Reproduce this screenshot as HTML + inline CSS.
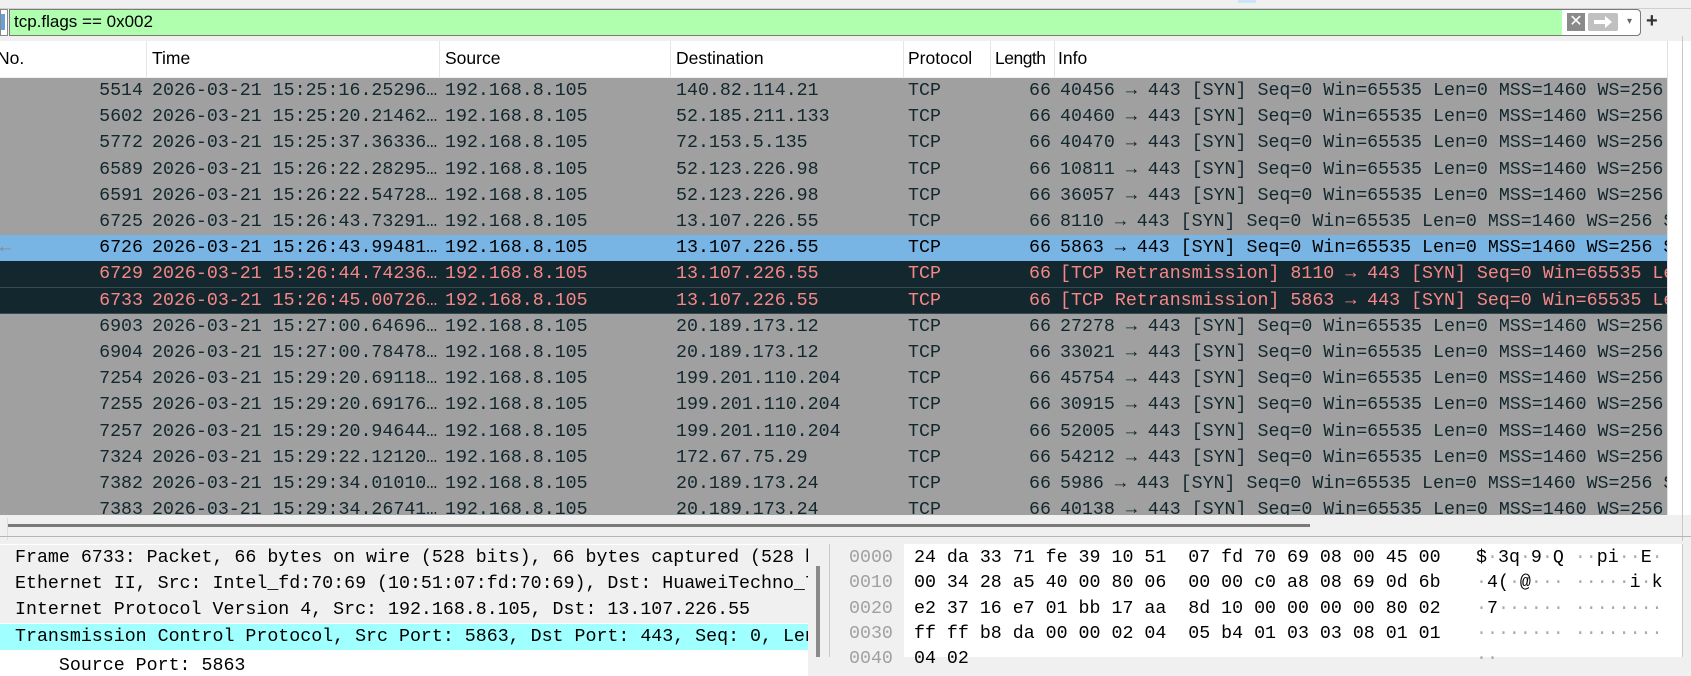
<!DOCTYPE html>
<html><head><meta charset="utf-8"><style>
*{margin:0;padding:0;box-sizing:border-box}
body{width:1691px;height:657px;overflow:hidden;background:#f0f0f0;position:relative;font-family:"Liberation Mono",monospace;}
.abs{position:absolute}
.mono{font-family:"Liberation Mono",monospace;font-size:18.3px;white-space:pre}
.sans{font-family:"Liberation Sans",sans-serif;font-size:17.5px;white-space:pre}
.row{position:absolute;left:0;width:1667px;height:26.2px;background:#a0a0a0;color:#12272e;overflow:hidden}
.row span{position:absolute;top:3px}
.sel{background:#78b4e4;color:#000}
.bad{background:#12272e;color:#f78787;border-bottom:1px solid #3a4a50}
.hdr{position:absolute;top:41px;height:36px;left:0;width:1667px;background:#fff}
.hdr span{position:absolute;top:7px;color:#000}
.sep{position:absolute;top:0;width:1px;height:36px;background:#e5e5e5}
.det{position:absolute;left:0;width:808px;height:26px;background:#f0f0f0;overflow:hidden}
.det span{position:absolute;left:15px;top:3px}
</style></head><body>
<div class="abs" style="left:0;top:0;width:1691px;height:9px;background:#f0f0f0;border-bottom:1px solid #d0d0d0"></div>
<div class="abs" style="left:1238px;top:0;width:18px;height:3px;background:#cce4f7"></div>
<div class="abs" style="left:0;top:9px;width:8px;height:27px;background:#fff;border:1px solid #888"></div>
<div class="abs" style="left:1px;top:14px;width:4px;height:16px;background:#6a9fd8"></div>
<div class="abs" style="left:9px;top:9px;width:1632px;height:27px;background:#afffaf;border:1px solid #7a7a7a;border-radius:0 4px 4px 0"></div>
<div class="abs sans" style="left:14px;top:12px;font-size:17px;color:#000">tcp.flags == 0x002</div>
<div class="abs" style="left:1562px;top:10px;width:78px;height:25px;background:#fff;border-radius:0 4px 4px 0"></div>
<div class="abs" style="left:1567px;top:13px;width:18px;height:18px;background:#8a8a8a;color:#fff;font:16px 'Liberation Sans';text-align:center;line-height:18px">✕</div>
<div class="abs" style="left:1588px;top:13px;width:30px;height:18px;background:#c0c0c0;border-radius:2px"></div>
<svg class="abs" style="left:1591px;top:14px" width="24" height="16"><path d="M3 6h11V2l7 6-7 6v-4H3z" fill="#fff"/></svg>
<div class="abs" style="left:1627px;top:16px;font:10px 'Liberation Sans';color:#666">▾</div>
<div class="abs" style="left:1646px;top:10px;font:bold 20px 'Liberation Sans';color:#333">+</div>
<div class="hdr sans">
<span style="left:-3px">No.</span><div class="sep" style="left:146px"></div>
<span style="left:152px">Time</span><div class="sep" style="left:439px"></div>
<span style="left:445px">Source</span><div class="sep" style="left:670px"></div>
<span style="left:676px">Destination</span><div class="sep" style="left:903px"></div>
<span style="left:908px">Protocol</span><div class="sep" style="left:990px"></div>
<span style="left:995px;width:57px;overflow:hidden;letter-spacing:-0.5px">Length</span><div class="sep" style="left:1054px"></div>
<span style="left:1058px">Info</span>
</div>
<div class="abs" style="left:1667px;top:41px;width:24px;height:474px;background:#fff;border-left:1px solid #e0e0e0"></div>
<div class="abs" style="left:1682px;top:36px;width:1px;height:505px;background:#c8c8c8"></div>
<div id="list"></div>
<div class="abs" style="left:0;top:515px;width:1682px;height:25px;background:#f0f0f0"></div>
<div class="abs" style="left:7px;top:518px;width:1px;height:22px;background:#ddd"></div>
<div class="abs" style="left:8px;top:524px;width:1302px;height:3px;background:#7a7a7a"></div>
<div class="abs" style="left:0;top:536px;width:1691px;height:1px;background:#b5b5b5"></div>
<div class="abs" style="left:0;top:544px;width:808px;height:113px;background:#fff"></div>
<div class="det mono" style="top:545px"><span>Frame 6733: Packet, 66 bytes on wire (528 bits), 66 bytes captured (528 bits)</span></div>
<div class="det mono" style="top:571px"><span>Ethernet II, Src: Intel_fd:70:69 (10:51:07:fd:70:69), Dst: HuaweiTechno_7</span></div>
<div class="det mono" style="top:597px"><span>Internet Protocol Version 4, Src: 192.168.8.105, Dst: 13.107.226.55</span></div>
<div class="det mono" style="top:624px;background:#a0ffff"><span>Transmission Control Protocol, Src Port: 5863, Dst Port: 443, Seq: 0, Len: 0</span></div>
<div class="det mono" style="top:650px;background:#fff"><span style="top:6px">    Source Port: 5863</span></div>
<div class="abs" style="left:808px;top:544px;width:21px;height:113px;background:#f0f0f0"></div>
<div class="abs" style="left:816px;top:566px;width:4px;height:91px;background:#8a8a8a"></div>
<div class="abs" style="left:829px;top:544px;width:1px;height:113px;background:#c8c8c8"></div>
<div class="abs" style="left:837px;top:544px;width:845px;height:113px;background:#fff"></div>
<div class="abs" style="left:837px;top:544px;width:67px;height:113px;background:#f0f0f0"></div>
<div class="abs mono" style="left:849px;top:546px;line-height:25.3px;color:#a0a0a0">0000
0010
0020
0030
0040</div>
<div class="abs mono" style="left:914px;top:546px;line-height:25.3px;color:#000">24 da 33 71 fe 39 10 51  07 fd 70 69 08 00 45 00
00 34 28 a5 40 00 80 06  00 00 c0 a8 08 69 0d 6b
e2 37 16 e7 01 bb 17 aa  8d 10 00 00 00 00 80 02
ff ff b8 da 00 00 02 04  05 b4 01 03 03 08 01 01
04 02</div>
<div class="abs mono" style="left:1476px;top:546px;line-height:25.3px;color:#000">$<b style="color:#aaa;font-weight:normal">·</b>3q<b style="color:#aaa;font-weight:normal">·</b>9<b style="color:#aaa;font-weight:normal">·</b>Q <b style="color:#aaa;font-weight:normal">··</b>pi<b style="color:#aaa;font-weight:normal">··</b>E<b style="color:#aaa;font-weight:normal">·</b>
<b style="color:#aaa;font-weight:normal">·</b>4(<b style="color:#aaa;font-weight:normal">·</b>@<b style="color:#aaa;font-weight:normal">···</b> <b style="color:#aaa;font-weight:normal">·····</b>i<b style="color:#aaa;font-weight:normal">·</b>k
<b style="color:#aaa;font-weight:normal">·</b>7<b style="color:#aaa;font-weight:normal">······ ········</b>
<span style="color:#aaa">········ ········</span>
<span style="color:#aaa">··</span></div>
<div class="abs" style="left:1682px;top:544px;width:9px;height:113px;background:#f0f0f0;border-left:1px solid #c8c8c8"></div>
<script>
const d=[
["5514","15:25:16.25296…","140.82.114.21","40456 → 443 [SYN] Seq=0 Win=65535 Len=0 MSS=1460 WS=256 SACK_PERM"],
["5602","15:25:20.21462…","52.185.211.133","40460 → 443 [SYN] Seq=0 Win=65535 Len=0 MSS=1460 WS=256 SACK_PERM"],
["5772","15:25:37.36336…","72.153.5.135","40470 → 443 [SYN] Seq=0 Win=65535 Len=0 MSS=1460 WS=256 SACK_PERM"],
["6589","15:26:22.28295…","52.123.226.98","10811 → 443 [SYN] Seq=0 Win=65535 Len=0 MSS=1460 WS=256 SACK_PERM"],
["6591","15:26:22.54728…","52.123.226.98","36057 → 443 [SYN] Seq=0 Win=65535 Len=0 MSS=1460 WS=256 SACK_PERM"],
["6725","15:26:43.73291…","13.107.226.55","8110 → 443 [SYN] Seq=0 Win=65535 Len=0 MSS=1460 WS=256 SACK_PERM"],
["6726","15:26:43.99481…","13.107.226.55","5863 → 443 [SYN] Seq=0 Win=65535 Len=0 MSS=1460 WS=256 SACK_PERM","sel"],
["6729","15:26:44.74236…","13.107.226.55","[TCP Retransmission] 8110 → 443 [SYN] Seq=0 Win=65535 Len=0","bad"],
["6733","15:26:45.00726…","13.107.226.55","[TCP Retransmission] 5863 → 443 [SYN] Seq=0 Win=65535 Len=0","bad"],
["6903","15:27:00.64696…","20.189.173.12","27278 → 443 [SYN] Seq=0 Win=65535 Len=0 MSS=1460 WS=256 SACK_PERM"],
["6904","15:27:00.78478…","20.189.173.12","33021 → 443 [SYN] Seq=0 Win=65535 Len=0 MSS=1460 WS=256 SACK_PERM"],
["7254","15:29:20.69118…","199.201.110.204","45754 → 443 [SYN] Seq=0 Win=65535 Len=0 MSS=1460 WS=256 SACK_PERM"],
["7255","15:29:20.69176…","199.201.110.204","30915 → 443 [SYN] Seq=0 Win=65535 Len=0 MSS=1460 WS=256 SACK_PERM"],
["7257","15:29:20.94644…","199.201.110.204","52005 → 443 [SYN] Seq=0 Win=65535 Len=0 MSS=1460 WS=256 SACK_PERM"],
["7324","15:29:22.12120…","172.67.75.29","54212 → 443 [SYN] Seq=0 Win=65535 Len=0 MSS=1460 WS=256 SACK_PERM"],
["7382","15:29:34.01010…","20.189.173.24","5986 → 443 [SYN] Seq=0 Win=65535 Len=0 MSS=1460 WS=256 SACK_PERM"],
["7383","15:29:34.26741…","20.189.173.24","40138 → 443 [SYN] Seq=0 Win=65535 Len=0 MSS=1460 WS=256 SACK_PERM"]];
let h="";
d.forEach((r,i)=>{
 const top=78+i*26.2;
 h+=`<div class="row mono ${r[4]||""}" style="top:${top}px;${i==16?'height:'+(515-top)+'px':''}">`+
 (r[4]=="sel"?`<span style="left:0;color:#888">←</span>`:"")+
 `<span style="left:90px;width:53px;text-align:right">${r[0]}</span><span style="left:152px">2026-03-21 ${r[1]}</span><span style="left:445px">192.168.8.105</span><span style="left:676px">${r[2]}</span><span style="left:908px">TCP</span><span style="left:1025px;width:26px;text-align:right">66</span><span style="left:1060px">${r[3]}</span></div>`;
});
document.getElementById("list").innerHTML=h;
</script>
</body></html>
